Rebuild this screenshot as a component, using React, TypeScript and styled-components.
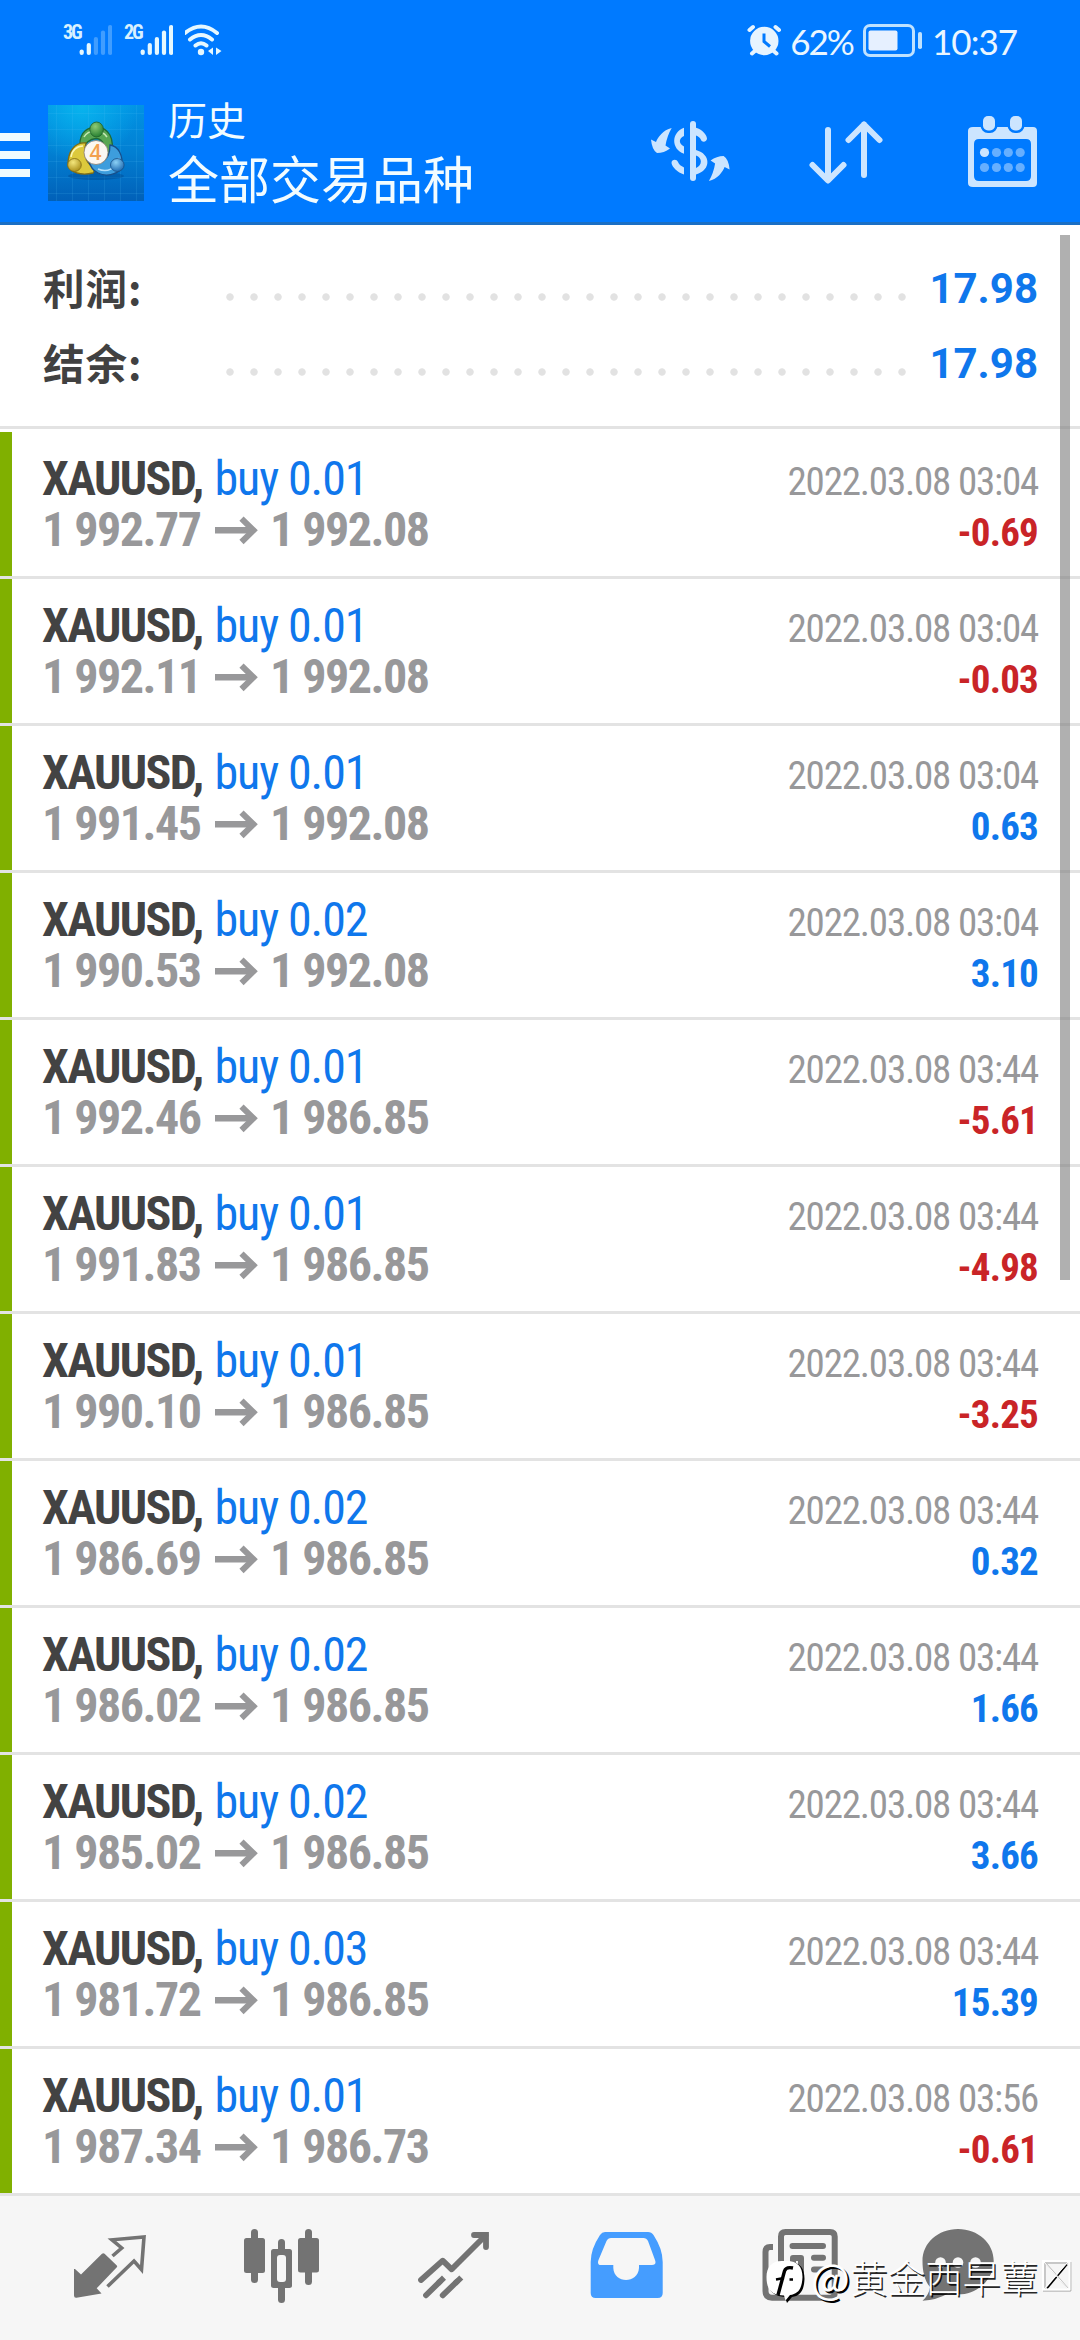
import React from 'react';
import styled, { createGlobalStyle } from 'styled-components';

const BLUE = '#007aff';
const ICE = '#cce5ff';
const GREY = '#737373';

const GlobalStyle = createGlobalStyle`
  *, *::before, *::after { box-sizing: border-box; }
  body { margin: 0; background: #fff; }
  svg { display: block; flex: none; }
`;

const Screen = styled.main`
  position: relative;
  display: flex;
  flex-direction: column;
  width: 1080px;
  height: 2340px;
  overflow: hidden;
  background: #fff;
  font-family: Roboto, "Noto Sans CJK SC", sans-serif;
`;

const StatusBar = styled.header`
  display: flex;
  justify-content: space-between;
  height: 81px;
  padding: 0 63px 0 63px;
  background: ${BLUE};
`;

const StatusGroup = styled.div<{ $gap?: number }>`
  display: flex;
  align-items: center;
  gap: ${(p) => p.$gap ?? 0}px;
  height: 81px;
`;

const StatusText = styled.span<{ $spacing: number }>`
  font: 400 35px/42px Lato, sans-serif;
  letter-spacing: ${(p) => p.$spacing}px;
  color: #eaf6ff;
`;

const Network = styled.span`
  align-self: flex-start;
  width: 14px;
  margin-top: 22px;
  font: 700 20px/20px "Roboto Condensed", Roboto, sans-serif;
  font-stretch: 75%;
  letter-spacing: -2px;
  color: #d8f1ff;
`;

const Toolbar = styled.nav`
  display: flex;
  align-items: center;
  height: 144px;
  padding-right: 42px;
  background: ${BLUE};
  box-shadow: inset 0 -3px #1a6fc4;
`;

const MenuButton = styled.button`
  display: flex;
  flex-direction: column;
  gap: 10px;
  width: 30px;
  margin: 4px 18px 0 0;
  padding: 0;
  border: 0;
  background: none;
`;

const MenuBar = styled.span`
  height: 8px;
  background: #f0fbff;
`;

const Titles = styled.div`
  display: flex;
  flex-direction: column;
  flex: 1;
  padding: 0 0 9px 24px;
  color: #f2fcff;
  font-family: "Noto Sans CJK SC", sans-serif;
`;

const Subtitle = styled.div`
  font-size: 39px;
  line-height: 58px;
`;

const Title = styled.div`
  font-size: 51px;
  line-height: 61px;
`;

const Actions = styled.div`
  display: flex;
  align-items: center;
  gap: 79px;
`;

const Summary = styled.section`
  display: flex;
  flex-direction: column;
  height: 204px;
  padding: 26px 42px 0 43px;
  border-bottom: 3px solid #e3e3e3;
`;

const SummaryRow = styled.div`
  display: flex;
  align-items: center;
  height: 75px;
`;

const SummaryLabel = styled.span`
  width: 175px;
  font: 700 41.5px/72px "Noto Sans CJK SC", sans-serif;
  letter-spacing: 1px;
  margin-bottom: 3px;
  color: #414141;
`;

const Leader = styled.span`
  width: 696px;
  height: 8px;
  margin-top: 16px;
  background: radial-gradient(circle at center, #e2e2e2 3.3px, transparent 4.1px) 0 0 / 24px 8px repeat-x;
`;

const SummaryValue = styled.span`
  flex: 1;
  font: 700 42px/75px Roboto, sans-serif;
  text-align: right;
  white-space: nowrap;
  color: #0f77ec;
`;

const Deals = styled.section`
  display: flex;
  flex-direction: column;
  padding-top: 3px;
`;

const DealRow = styled.article`
  display: flex;
  justify-content: space-between;
  height: 147px;
  padding-right: 42px;
  border-bottom: 3px solid #e3e3e3;
  font-family: "Roboto Condensed", Roboto, sans-serif;
  font-stretch: 75%;
`;

const Marker = styled.div`
  width: 12px;
  background: #80b000;
`;

const DealMain = styled.div`
  flex: 1;
  padding: 21px 0 0 30px;
  font-size: 48px;
  line-height: 51px;
  white-space: nowrap;
`;

const DealHead = styled.div`
  display: flex;
`;

const Instrument = styled.span`
  width: 172.5px;
  font-weight: 700;
  letter-spacing: -1.6px;
  color: #434343;
`;

const Volume = styled.span`
  letter-spacing: -1.1px;
  color: #0f77ec;
`;

const Prices = styled.div`
  display: flex;
  align-items: center;
  height: 51px;
  font-weight: 700;
  color: #98989a;
`;

const Price = styled.span`
  width: 173px;
  letter-spacing: -1.5px;
`;

const DealSide = styled.div`
  padding-top: 25px;
  font-size: 39px;
  line-height: 51px;
  text-align: right;
`;

const Time = styled.div`
  letter-spacing: -1.2px;
  color: #98989a;
`;

const Profit = styled.div<{ $loss: boolean }>`
  font-weight: 700;
  letter-spacing: -0.8px;
  color: ${(p) => (p.$loss ? '#c92427' : '#0f77ec')};
`;

const BottomNav = styled.nav`
  display: flex;
  height: 144px;
  padding-left: 24px;
  background: #f6f6f6;
`;

const ScrollThumb = styled.div`
  position: absolute;
  top: 235px;
  right: 10px;
  width: 10px;
  height: 1045px;
  background: rgba(128, 128, 128, 0.62);
`;

const Watermark = styled.div`
  position: absolute;
  left: 764px;
  top: 2249px;
  display: flex;
  align-items: center;
  height: 54px;
  font: 300 37.6px/54px "Noto Sans CJK SC", sans-serif;
  color: #fff;
  text-shadow: 1.5px 1.5px 0 rgba(0, 0, 0, 0.85);
  white-space: nowrap;
`;

const At = styled.span`
  width: 39px;
  margin-left: 5px;
  font-size: 41px;
  font-weight: 400;
  text-shadow: 2px 2px 0 #000;
`;

function SignalBars({ level }: { level: number }) {
  const tops = [49.5, 43, 37, 30.5, 25];
  return (
    <svg width="35" height="81" viewBox="77 0 35 81" fill="#e6f8ff">
      {tops.map((y, i) => (
        <rect key={y} x={79.6 + i * 7.1} y={y} width="4.2" height={55 - y} rx="2.1" opacity={i < level ? 1 : 0.28} />
      ))}
    </svg>
  );
}

function Wifi() {
  return (
    <svg width="42" height="81" viewBox="185 0 42 81" fill="none" stroke="#e6f8ff" strokeWidth="4" strokeLinecap="round">
      <path d="M185 33Q201 20 217 33M190 39.5Q201 30.5 212 39.5M195.500 45.500Q201 41 206.500 45.500" />
      <circle cx="201" cy="52" r="3.2" fill="#e6f8ff" stroke="none" />
      <path d="M213 47.500V55L208 51ZM216 47.500V55L221.500 51Z" fill="#e6f8ff" stroke="none" />
    </svg>
  );
}

function Alarm() {
  return (
    <svg width="36" height="81" viewBox="748 0 36 81">
      <g stroke="#e6f4ff" strokeLinecap="round" fill="none">
        <path d="M751.500 30L755 27M781 30L777.500 27" strokeWidth="4" />
        <path d="M758 50L754 53.500M774.500 50L778.500 53.500" strokeWidth="4" />
      </g>
      <circle cx="766.300" cy="41" r="14.200" fill="#e6f4ff" />
      <path d="M766 33.500V41.500L772 46.500" stroke={BLUE} strokeWidth="3" fill="none" />
    </svg>
  );
}

function Battery() {
  return (
    <svg width="62" height="81" viewBox="860 0 62 81">
      <rect x="863.500" y="25.500" width="49" height="30" rx="5.500" fill="none" stroke="#bfe2ff" strokeWidth="3" />
      <rect x="867.500" y="30.500" width="29" height="20" rx="2" fill="#e6f0ff" />
      <rect x="917" y="32" width="4" height="17" rx="1.800" fill="#bfe2ff" />
    </svg>
  );
}

function AppLogo() {
  const grid = [8, 24, 40, 56, 72, 88];
  return (
    <svg width="96" height="96" viewBox="48 105 96 96">
      <defs>
        <linearGradient id="tile" x1="0" y1="0" x2="0" y2="1">
          <stop offset="0" stopColor="#0193e4" />
          <stop offset="0.5" stopColor="#027fd2" />
          <stop offset="1" stopColor="#0160b8" />
        </linearGradient>
        <radialGradient id="glow" cx="0.35" cy="0" r="0.6">
          <stop offset="0" stopColor="#08b4ee" />
          <stop offset="1" stopColor="#08b4ee" stopOpacity="0" />
        </radialGradient>
        <radialGradient id="green" cx="0.4" cy="0.3" r="0.75">
          <stop offset="0" stopColor="#8fcb74" />
          <stop offset="1" stopColor="#1f7a2d" />
        </radialGradient>
        <radialGradient id="yellow" cx="0.4" cy="0.3" r="0.75">
          <stop offset="0" stopColor="#f3e67c" />
          <stop offset="1" stopColor="#a88c16" />
        </radialGradient>
        <radialGradient id="blue" cx="0.4" cy="0.3" r="0.75">
          <stop offset="0" stopColor="#8bd0f5" />
          <stop offset="1" stopColor="#1a66ae" />
        </radialGradient>
      </defs>
      <rect x="48" y="105" width="96" height="96" fill="url(#tile)" />
      <rect x="48" y="105" width="96" height="96" fill="url(#glow)" />
      <g stroke="#5cc6f5" strokeOpacity="0.14" strokeWidth="1">
        {grid.map((v) => (
          <path key={v} d={`M${48.5 + v} 105V201M48 ${105.5 + v}H144`} />
        ))}
      </g>
      <ellipse cx="96" cy="176" rx="28" ry="4" fill="#013f80" opacity="0.35" />
      <path d="M80.500 150C78 136 84 127.500 96 127C109 127.500 115 139 111 154L104 163C107 148 104 139 96 138.500C89 139 86 143 80.500 150Z" fill="#57a653" stroke="#206a35" strokeWidth="1.300" />
      <path d="M86 143C75 142 67.500 151 68 166C71 172 80 176 93 173L96 168C88 166 82 157 86 143Z" fill="#dcc93c" stroke="#806d14" strokeWidth="1.300" />
      <path d="M110 145C118 146 123.500 155 122 168C116 175 106 177 98 173C92 170 90 166 89 161C98 167 110 162 110 145Z" fill="#3d9ddd" stroke="#174f8b" strokeWidth="1.300" />
      <path d="M84 137C88 130 101 128 107 137" fill="none" stroke="#c5e8b4" strokeWidth="1.500" />
      <path d="M71 157C72 150 77 146 83 146" fill="none" stroke="#fbf6b0" strokeWidth="1.500" />
      <path d="M98 169C107 173 116 169 119 158" fill="none" stroke="#b5e0fa" strokeWidth="1.500" />
      <ellipse cx="96.600" cy="129.500" rx="6.800" ry="7.500" fill="url(#green)" stroke="#205f29" strokeWidth="0.800" />
      <ellipse cx="74.500" cy="165" rx="6.800" ry="6.500" fill="url(#yellow)" stroke="#816c13" strokeWidth="0.800" />
      <ellipse cx="117.300" cy="165" rx="6.800" ry="6.500" fill="url(#blue)" stroke="#184f87" strokeWidth="0.800" />
      <circle cx="96" cy="152.500" r="12" fill="#faf7f2" stroke="#8a7f70" strokeWidth="0.800" />
      <text x="95.500" y="160" textAnchor="middle" fontFamily="Open Sans, sans-serif" fontSize="21" fontWeight="600" fill="#f2a04e">4</text>
    </svg>
  );
}

function CurrencyIcon() {
  const arrow = 'M671.700 128C663 130 658 137 656 142L651 139.500Q652 150 657 153Q664 153 670 148.500L665.500 145.500Q667 136 671.700 128Z';
  return (
    <svg width="80" height="72" viewBox="650 117 80 72">
      <path d={arrow} fill={ICE} />
      <path d={arrow} fill={ICE} transform="rotate(180 690.3 154.500)" />
      <path d="M684 127.700V136C678.500 138.500 678.500 143.500 684 146.500V153.700C671 149 671 132.500 684 127.700Z" fill={ICE} />
      <path d="M684 174.500C677.500 172.500 672 167 671.500 163C671.500 159.500 676.500 158.500 678 162C679 164.500 681 166 684 167.500Z" fill={ICE} />
      <path d="M696 127.700C702 129.500 706.500 134 707 138.500C707 142 702 143 700.800 139.500C700 137.500 698.500 136.500 696 135.500Z" fill={ICE} />
      <path d="M696 150C711 154 711.500 170 696 174.500V168C702.500 165.500 702.500 157.500 696 155.500Z" fill={ICE} />
      <rect x="690" y="121" width="6" height="60" rx="3" fill={ICE} />
    </svg>
  );
}

function SortIcon() {
  return (
    <svg width="74" height="72" viewBox="809 117 74 72" fill="none" stroke={ICE} strokeWidth="6" strokeLinecap="round" strokeLinejoin="round">
      <path d="M828 130V180M812.500 165L828 180.500L843.500 165M864 175V124.500M848.500 140L864 124.500L879.500 140" />
    </svg>
  );
}

function CalendarIcon() {
  return (
    <svg width="76" height="76" viewBox="962 115 76 76">
      <path fillRule="evenodd" fill={ICE} d="M973 127H1033Q1037 127 1037 131V183Q1037 187 1033 187H973Q968 187 968 183V131Q968 127 973 127ZM979 139Q974 139 974 144V176Q974 181 979 181H1026Q1031 181 1031 176V144Q1031 139 1026 139Z" />
      <g fill={ICE} stroke={BLUE} strokeWidth="5" paintOrder="stroke">
        <rect x="983" y="116" width="12" height="14.500" rx="5" />
        <rect x="1010" y="116" width="12" height="14.500" rx="5" />
      </g>
      {[152.5, 167.5].map((y) =>
        [984.5, 996.5, 1008.3, 1020.2].map((x) => (
          <circle key={`${x}-${y}`} cx={x} cy={y} r="4.600" fill={x < 990 && y < 160 ? ICE : '#66afff'} />
        )),
      )}
    </svg>
  );
}

function PriceArrow() {
  return (
    <svg width="55" height="30" viewBox="215 515 55 30" fill="none" stroke="#98989a">
      <path d="M215 530.300H253" strokeWidth="6.500" />
      <path d="M241.500 518.700L253.500 530.300L241.500 542" strokeWidth="6" />
    </svg>
  );
}

function QuotesIcon() {
  return (
    <>
      <path d="M75 2269L81 2274.500L102 2253.700Q103.300 2252.700 104.600 2253.700L116.800 2265.500Q117.500 2266.500 116.800 2267.300L96.700 2288.300L101.500 2293.500L76.500 2297.700Q74 2298 74 2295.500V2269Z" fill={GREY} />
      <path d="M112.500 2256L121.700 2248L112 2239.800L144 2237L141.500 2269.500L134 2261L107.500 2286.500" fill="none" stroke={GREY} strokeWidth="3.600" />
    </>
  );
}

function ChartIcon() {
  return (
    <g fill={GREY}>
      <rect x="251" y="2229" width="7" height="54" rx="3.500" />
      <rect x="244" y="2238" width="21" height="35" rx="2.500" />
      <rect x="278" y="2239" width="7" height="64" rx="3.500" />
      <rect x="271" y="2249" width="21" height="39" rx="2.500" />
      <rect x="277" y="2255" width="9" height="27" rx="3" fill="#f6f6f6" />
      <rect x="305" y="2229" width="7" height="56" rx="3.500" />
      <rect x="298" y="2238" width="21" height="34.500" rx="2.500" />
    </g>
  );
}

function TradeIcon() {
  return (
    <g fill="none" stroke={GREY} strokeWidth="5.800" strokeLinecap="round">
      <path d="M421 2280L442.700 2260.700L451.700 2269.300L485.500 2235.500" strokeLinejoin="round" />
      <path d="M474 2235H486V2247" />
      <path d="M426 2295.300L440 2281.500M442.700 2295.300L457 2281.500" />
      <path d="M438 2283.500L444 2277.700M455 2283.500L461.300 2277.500" strokeLinecap="butt" />
    </g>
  );
}

function HistoryIcon() {
  return (
    <path
      fillRule="evenodd"
      fill="#459dff"
      d="M605 2232H648Q651.500 2232 653.500 2235Q662.700 2249 662.700 2262V2293Q662.700 2298 657.700 2298H595.700Q590.700 2298 590.700 2293V2262Q590.700 2249 600 2235Q602 2232 605 2232ZM611 2238Q608 2238 606.500 2241L598.500 2260Q596.800 2265 601 2265H613.300V2268C614 2284 638 2284 639 2268V2265H652Q656.800 2265 655 2260L648 2241Q646.500 2238 643.500 2238Z"
    />
  );
}

function NewsIcon() {
  return (
    <g fill="none" stroke={GREY} strokeWidth="6">
      <path d="M773 2247H770Q765.500 2247 765.500 2252V2291Q765.500 2297.700 772 2297.700H830Q834.700 2297.700 834.700 2293V2236.500Q834.700 2232 830 2232H785.500Q781 2232 781 2236.500V2290" />
      <path d="M792.500 2246H823M814 2257.700H823M814 2269.500H823" strokeLinecap="round" />
      <rect x="793" y="2258" width="8" height="14" strokeLinejoin="round" />
    </g>
  );
}

function MessagesIcon() {
  return (
    <>
      <path d="M958 2229C978 2229 993.700 2243 993.700 2261C993.700 2279 978 2294.500 958 2294.500Q953 2294.500 948 2293.500Q937 2300 922.500 2300.700Q929 2295 930 2287C924 2280 922.500 2270 922.500 2261C922.500 2243 938 2229 958 2229Z" fill={GREY} />
      {[940.5, 958, 975.5].map((x) => (
        <circle key={x} cx={x} cy="2262.500" r="5.300" fill="#f6f6f6" />
      ))}
    </>
  );
}

function WatermarkBadge() {
  return (
    <svg width="42" height="54" viewBox="764 2249 42 54">
      <path d="M786 2263C799 2261 804.500 2267 804.500 2279C804 2291 800 2296 792 2297L787 2303L785 2297C773 2296 768 2291 768 2279C768 2267 775 2261 786 2263Z" fill="#000" />
      <path d="M784 2261C797 2260 802.500 2266 802.500 2277C802 2289 798 2294 790 2295L785.500 2300.500L784 2295.500C771 2295 766.500 2289 766.500 2277C766.500 2266 773 2260 784 2261Z" fill="#fff" />
      <path d="M793 2268Q786 2266.500 784.500 2271L778 2295" fill="none" stroke="#000" strokeWidth="3.400" />
      <path d="M776 2279.500L784 2278M789.500 2279.500H793" fill="none" stroke="#000" strokeWidth="2.400" />
    </svg>
  );
}

function MissingGlyph() {
  return (
    <svg width="35" height="34" viewBox="1037 2261 35 34" fill="none">
      <path d="M1069.800 2264V2293H1042M1044 2291V2265H1067" stroke="#999" strokeWidth="1" />
      <path d="M1046 2290.500L1066 2266.500" stroke="#000" strokeWidth="1.600" />
      <path d="M1045 2265.500L1067 2290.500" stroke="#bbb" strokeWidth="1.400" />
      <rect x="1042" y="2263" width="26.500" height="28.500" stroke="#fff" strokeWidth="2" />
      <path d="M1043 2264L1067 2291M1067 2264L1043 2291" stroke="#fff" strokeWidth="1" />
    </svg>
  );
}

const navIcons = [QuotesIcon, ChartIcon, TradeIcon, HistoryIcon, NewsIcon, MessagesIcon];

const summary = [
  ['利润:', '17.98'],
  ['结余:', '17.98'],
];

const deals = [
  ['0.01', '1 992.77', '1 992.08', '03:04', '-0.69'],
  ['0.01', '1 992.11', '1 992.08', '03:04', '-0.03'],
  ['0.01', '1 991.45', '1 992.08', '03:04', '0.63'],
  ['0.02', '1 990.53', '1 992.08', '03:04', '3.10'],
  ['0.01', '1 992.46', '1 986.85', '03:44', '-5.61'],
  ['0.01', '1 991.83', '1 986.85', '03:44', '-4.98'],
  ['0.01', '1 990.10', '1 986.85', '03:44', '-3.25'],
  ['0.02', '1 986.69', '1 986.85', '03:44', '0.32'],
  ['0.02', '1 986.02', '1 986.85', '03:44', '1.66'],
  ['0.02', '1 985.02', '1 986.85', '03:44', '3.66'],
  ['0.03', '1 981.72', '1 986.85', '03:44', '15.39'],
  ['0.01', '1 987.34', '1 986.73', '03:56', '-0.61'],
];

export default function App() {
  return (
    <Screen>
      <GlobalStyle />
      <StatusBar>
        <StatusGroup $gap={12}>
          <StatusGroup>
            <Network>3G</Network>
            <SignalBars level={2} />
          </StatusGroup>
          <StatusGroup>
            <Network>2G</Network>
            <SignalBars level={5} />
          </StatusGroup>
          <Wifi />
        </StatusGroup>
        <StatusGroup $gap={8}>
          <Alarm />
          <StatusText $spacing={-2}>62%</StatusText>
          <Battery />
          <StatusText $spacing={-1}>&#8202;10:37</StatusText>
        </StatusGroup>
      </StatusBar>
      <Toolbar>
        <MenuButton aria-label="menu">
          <MenuBar />
          <MenuBar />
          <MenuBar />
        </MenuButton>
        <AppLogo />
        <Titles>
          <Subtitle>历史</Subtitle>
          <Title>全部交易品种</Title>
        </Titles>
        <Actions>
          <CurrencyIcon />
          <SortIcon />
          <CalendarIcon />
        </Actions>
      </Toolbar>
      <Summary>
        {summary.map(([label, value]) => (
          <SummaryRow key={label}>
            <SummaryLabel>{label}</SummaryLabel>
            <Leader />
            <SummaryValue>{value}</SummaryValue>
          </SummaryRow>
        ))}
      </Summary>
      <Deals>
        {deals.map(([volume, open, close, time, profit]) => (
          <DealRow key={open}>
            <Marker />
            <DealMain>
              <DealHead>
                <Instrument>XAUUSD,</Instrument>
                <Volume>buy {volume}</Volume>
              </DealHead>
              <Prices>
                <Price>{open}</Price>
                <PriceArrow />
                <Price>{close}</Price>
              </Prices>
            </DealMain>
            <DealSide>
              <Time>2022.03.08 {time}</Time>
              <Profit $loss={profit.startsWith('-')}>{profit}</Profit>
            </DealSide>
          </DealRow>
        ))}
      </Deals>
      <BottomNav>
        {navIcons.map((Icon, i) => (
          <svg key={i} width="172" height="144" viewBox={`${24 + 172 * i} 2196 172 144`}>
            <Icon />
          </svg>
        ))}
      </BottomNav>
      <ScrollThumb />
      <Watermark>
        <WatermarkBadge />
        <At>@</At>
        黄金西早蕈
        <MissingGlyph />
      </Watermark>
    </Screen>
  );
}
